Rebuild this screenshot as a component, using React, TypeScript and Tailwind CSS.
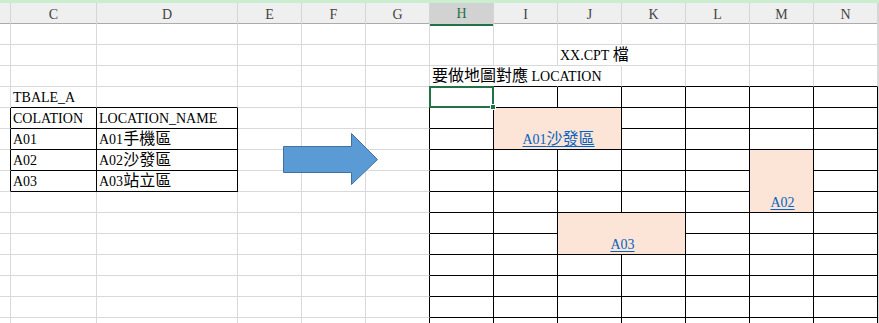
const cols = ["", "C", "D", "E", "F", "G", "H", "I", "J", "K", "L", "M", "N", ""]

type Cell = { text?: string; link?: boolean; span?: string; fill?: boolean }

// sheet rows 1..15, keyed by "row-col"
const cells: Record<string, Cell> = {
  "2-8": { text: "XX.CPT 檔" },
  "3-6": { text: "要做地圖對應 LOCATION" },
  "4-1": { text: "TBALE_A" },
  "5-1": { text: "COLATION" },
  "5-2": { text: "LOCATION_NAME" },
  "6-1": { text: "A01" },
  "6-2": { text: "A01手機區" },
  "7-1": { text: "A02" },
  "7-2": { text: "A02沙發區" },
  "8-1": { text: "A03" },
  "8-2": { text: "A03站立區" },
  "5-7": { text: "A01沙發區", link: true, span: "col-span-2 row-span-2", fill: true },
  "7-11": { text: "A02", link: true, span: "row-span-3", fill: true },
  "10-8": { text: "A03", link: true, span: "col-span-2 row-span-2", fill: true },
}

// cells hidden under a merge
const covered = new Set(["5-8", "6-7", "6-8", "8-11", "9-11", "10-9", "11-8", "11-9"])
// cells whose right gridline is hidden by overflowing text
const noRight = new Set(["2-8", "3-6", "3-7"])

const inBox = (r: number, c: number) =>
  (c >= 1 && c <= 2 && r >= 5 && r <= 8) || (c >= 6 && c <= 12 && r >= 4)

// bottom-right of a merged cell, for its border check
const spanEnd: Record<string, [number, number]> = {
  "5-7": [6, 8],
  "7-11": [9, 11],
  "10-8": [11, 9],
}

function Txt({ s }: { s: string }) {
  // CJK glyphs sit a little larger than the latin ones
  const parts = s.split(/([\u3400-\u9fff]+)/)
  return (
    <>
      {parts.map((p, i) =>
        /[\u3400-\u9fff]/.test(p) ? (
          <span key={i} className="text-[16px]">
            {p}
          </span>
        ) : (
          <span key={i}>{p}</span>
        ),
      )}
    </>
  )
}

export default function App() {
  const rows = Array.from({ length: 15 }, (_, i) => i + 1)

  return (
    <div
      className="relative h-[323px] w-[879px] overflow-hidden bg-white text-[14px] text-black"
      style={{ fontFamily: '"Liberation Serif", "Noto Sans CJK TC", serif' }}
    >
      <div className="h-[3px] bg-[#cbeed3]" />

      {/* column header */}
      <div className="grid h-[21px] grid-cols-[11px_86px_141px_repeat(10,64px)_1fr] border-b border-[#ababab] bg-[#efefef]">
        {cols.map((c, i) =>
          c === "H" ? (
            <div
              key={i}
              className="flex items-center justify-center border-r border-b-2 border-r-[#d5d5d5] border-b-[#217346] bg-[#d2d2d2] text-[#217346]"
            >
              {c}
            </div>
          ) : (
            <div key={i} className="flex items-center justify-center border-r border-[#d5d5d5] text-[#444]">
              {c}
            </div>
          ),
        )}
      </div>

      {/* sheet body */}
      <div className="grid grid-cols-[11px_86px_141px_repeat(10,64px)_1fr] auto-rows-[21px]">
        {rows.map((r) =>
          cols.map((_, c) => {
            const key = `${r}-${c}`
            if (covered.has(key)) return null
            const cell = cells[key]
            const [er, ec] = spanEnd[key] ?? [r, c]
            const rightBlack = inBox(er, ec) || inBox(er, ec + 1)
            const bottomBlack = inBox(er, ec) || inBox(er + 1, ec)
            const right = noRight.has(key)
              ? "border-r-transparent"
              : rightBlack
                ? "border-r-black"
                : "border-r-[#d9d9d9]"
            const bottom = bottomBlack ? "border-b-black" : "border-b-[#d9d9d9]"
            const selected = key === "4-6"

            return (
              <div
                key={key}
                className={`relative flex items-end border-r border-b ${right} ${bottom} ${cell?.span ?? ""} ${
                  cell?.fill ? "bg-[#fce4d6]" : ""
                } ${cell?.link ? "justify-center" : ""}`}
              >
                {cell?.text && (
                  <span
                    className={`relative z-10 whitespace-nowrap pb-[1px] pl-[2px] leading-[17px] ${
                      cell.link ? "pl-0 text-[#0563c1] underline underline-offset-2" : ""
                    }`}
                  >
                    <Txt s={cell.text} />
                  </span>
                )}
                {selected && (
                  <div className="absolute -top-px -left-px -right-px -bottom-px z-20 border-2 border-[#217346]">
                    <div className="absolute -right-[4px] -bottom-[4px] h-[6px] w-[6px] border border-white bg-[#217346]" />
                  </div>
                )}
              </div>
            )
          }),
        )}
      </div>

      {/* floating arrow shape */}
      <svg className="absolute left-[283px] top-[133px]" width="96" height="53" viewBox="0 0 96 53">
        <polygon
          points="0.5,13.5 68.5,13.5 68.5,0.5 94.5,26.5 68.5,51.5 68.5,39.5 0.5,39.5"
          fill="#5b9bd5"
          stroke="#41719c"
          strokeWidth="1"
        />
      </svg>
    </div>
  )
}
